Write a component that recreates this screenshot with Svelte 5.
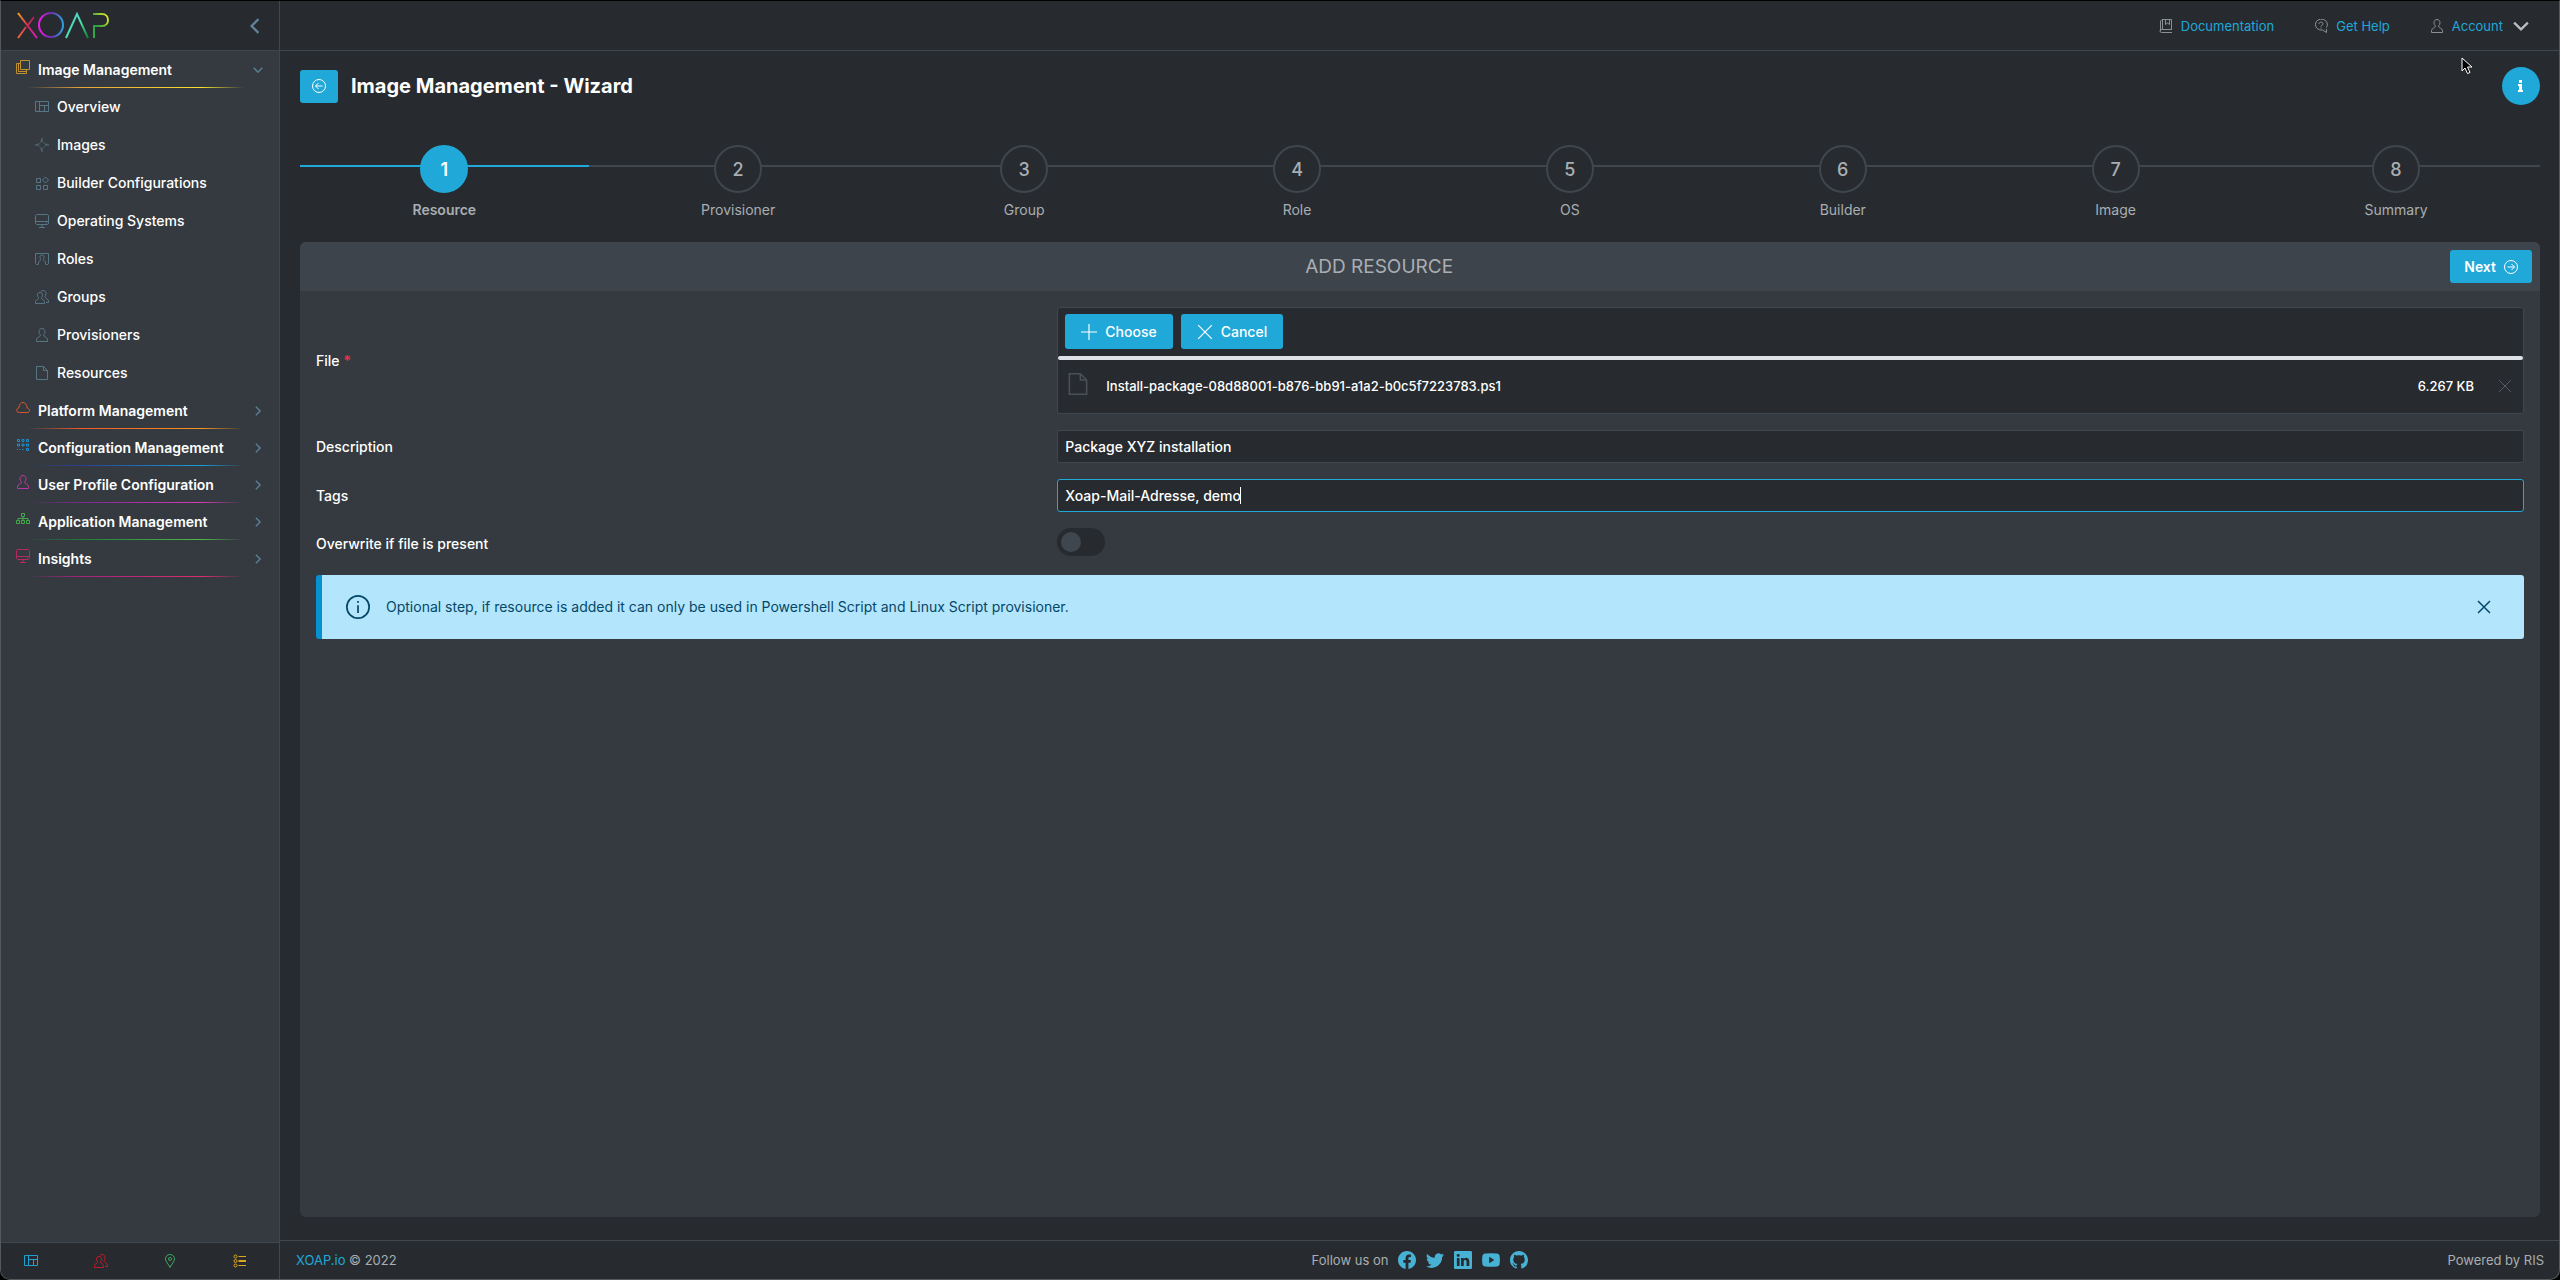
<script lang="ts">
	import { onMount } from 'svelte';

	interface Section {
		label: string;
		icon: string;
		color: string;
		from: string;
		to: string;
		open?: boolean;
		items?: { label: string; icon: string }[];
	}

	// Outline icons on a 14px grid
	const person =
		'M7 .5C5.200 .5 4 1.800 4 3.800c0 1.300.5 2.300 1.200 2.900v1.300C4.800 9 2 9 1.500 11.500v2h11v-2C12 9 9.200 9 8.800 8V6.700C9.500 6.100 10 5.100 10 3.800 10 1.800 8.800.5 7 .5z';
	const icons: Record<string, string> = {
		layout: 'M.5 1.500h13v10H.5zM4.500 1.500v10M4.500 5.500h9M9.500 5.500v6',
		images:
			'M7 0v4M7 10v4M0 7h4M10 7h4M4.500 5.500l1-1M8.500 4.500l1 1M9.500 8.500l-1 1M5.500 9.500l-1-1M3 5.500V7M11 5.500V7M5.500 3H7M5.500 11H7',
		builder: 'M1.500 2.500h4v4h-4zM1.500 9.500h4v4h-4zM8.500 9.500h4v4h-4zM10.500 1l3 3-3 3-3-3z',
		monitor: 'M1.500.5h11l1 1v8l-1 1h-11l-1-1v-8zM.5 7.500h13M7 10.500v3M4 13.500h6M11 9h1',
		roles:
			'M3 12.500H1.500l-1-1v-10h13v10l-1 1H11M7 3C5.500 3 5 4 5 5.200S5.500 7 5.500 7.500C5.500 9 4 9 3.500 10v2.500M7 3c1.500 0 2 1 2 2.200S8.500 7 8.500 7.500c0 1.500 1.500 1.500 2 2.500v2.500',
		groups:
			'M5 2.500c-1.600 0-2.500 1-2.500 2.700 0 1.200.4 1.900 1 2.400v1C3 9.600.8 9.700.5 11.500v2h9v-2C9.200 9.700 7 9.600 6.500 8.600v-1c.6-.5 1-1.200 1-2.400C7.500 3.500 6.600 2.500 5 2.500zM6 1.500C6.600.8 7.300.5 8.200.5c1.800 0 2.800 1.300 2.800 3 0 1.300-.5 2.200-1 2.700v1c.5 1.500 3.200 1.600 3.500 3.800v1.500H11',
		person,
		file: 'M1.500.5h7l4 4v9h-11zM8.500.5v4h4',
		copy: 'M4.500.5h9v9h-9zM4.500 3.500h-4v10h10v-4M2.500 3.500v8h8',
		cloud:
			'M3.500 11.500h7.500c3.500 0 3.200-4.300.2-4.500C11 3.500 9 1.500 7 1.500S3 3.500 2.800 7C-.2 7.200-.2 11.500 3.500 11.500z',
		grid: 'M1.500 1.500h2v2h-2zM6 1.500h2v2H6zM10.500 1.500h2v2h-2zM1.500 6h2v2h-2zM6 6h2v2H6zM10.500 6h2v2h-2zM10.500 10.500h2v2h-2zM1 11.500h1M3.500 11.500h1M6 11.500h1.500',
		tree: 'M5.500 1.500h3v3h-3zM.5 8.500h3v3h-3zM5.500 8.500h3v3h-3zM10.500 8.500h3v3h-3zM7 4.500v4M2 8.500v-2h10v2',
		pin: 'M7 .5C4.300.5 2.500 2.500 2.500 5c0 2.500 3 5 4.500 8.500C8.500 10 11.500 7.500 11.500 5 11.500 2.500 9.700.5 7 .5zM7 3.500a1.500 1.500 0 1 0 0 3 1.500 1.500 0 1 0 0-3z',
		list: 'M2.500 1a1.500 1.500 0 1 0 0 3 1.500 1.500 0 1 0 0-3zM2.500 5.500a1.500 1.500 0 1 0 0 3 1.500 1.500 0 1 0 0-3zM2.500 10a1.500 1.500 0 1 0 0 3 1.500 1.500 0 1 0 0-3zM5.500 2.500H13M5.500 6.500H13M5.500 7.500H13M5.500 11.500H13',
		book: 'M13 10.500H2.500M3 .5h9.500v10M1.500 12V2L3 .5M2.500 10.500a1.500 1.500 0 0 0 0 3H13M3.500.5v10M6.500.5v5l2-1.500 2 1.500v-5',
		help: 'M12.500 8.500A6 5.500 0 1 0 8.500 11l4 2.500V10M5 5c0-2.500 4-2.500 4 0 0 1-2 1-2 2.500M7 8.500v1',
		left: 'M7 .5a6.500 6.500 0 1 0 0 13 6.500 6.500 0 1 0 0-13zM10.500 7h-7M6.500 4l-3 3 3 3',
		right: 'M7 .5a6.500 6.500 0 1 0 0 13 6.500 6.500 0 1 0 0-13zM3.500 7h7M7.500 4l3 3-3 3',
		plus: 'M7 0v14M0 7h14',
		cross: 'M1 1l12 12M13 1L1 13',
		chevronDown: 'M1 4l6 6 6-6',
		chevronLeft: 'M10 1L4 7l6 6',
		chevronRight: 'M4 1l6 6-6 6',
		info: 'M7 .5a6.500 6.500 0 1 0 0 13 6.500 6.500 0 1 0 0-13zM7 6v4.500M7 3.500v1'
	};

	const sections: Section[] = [
		{
			label: 'Image Management',
			icon: 'copy',
			color: '#c0912f',
			from: '#e8a33d',
			to: '#f7e02e',
			open: true,
			items: [
				{ label: 'Overview', icon: 'layout' },
				{ label: 'Images', icon: 'images' },
				{ label: 'Builder Configurations', icon: 'builder' },
				{ label: 'Operating Systems', icon: 'monitor' },
				{ label: 'Roles', icon: 'roles' },
				{ label: 'Groups', icon: 'groups' },
				{ label: 'Provisioners', icon: 'person' },
				{ label: 'Resources', icon: 'file' }
			]
		},
		{ label: 'Platform Management', icon: 'cloud', color: '#d9582b', from: '#f05a28', to: '#f7941e' },
		{ label: 'Configuration Management', icon: 'grid', color: '#1b8fd0', from: '#2b3f94', to: '#16a0dc' },
		{ label: 'User Profile Configuration', icon: 'person', color: '#b93aa6', from: '#7a2a8f', to: '#d63cb6' },
		{ label: 'Application Management', icon: 'tree', color: '#45a848', from: '#1f7d3c', to: '#52b848' },
		{ label: 'Insights', icon: 'monitor', color: '#b72a66', from: '#a5237f', to: '#dc2f6c' }
	];

	const shortcuts = [
		{ label: 'Dashboard', icon: 'layout', color: '#20a0d0' },
		{ label: 'Users', icon: 'groups', color: '#c01c28' },
		{ label: 'Locations', icon: 'pin', color: '#3fa564' },
		{ label: 'Tasks', icon: 'list', color: '#dba520' }
	];

	const steps = ['Resource', 'Provisioner', 'Group', 'Role', 'OS', 'Builder', 'Image', 'Summary'];

	const social = [
		{
			label: 'Facebook',
			d: 'M16 8.049c0-4.446-3.582-8.05-8-8.05C3.58 0-.002 3.603-.002 8.05c0 4.017 2.926 7.347 6.750 7.951v-5.625h-2.030V8.050H6.750V6.275c0-2.017 1.195-3.131 3.022-3.131.876 0 1.791.157 1.791.157v1.980h-1.009c-.993 0-1.303.621-1.303 1.258v1.510h2.218l-.354 2.326H9.250V16c3.824-.604 6.750-3.934 6.750-7.951z'
		},
		{
			label: 'Twitter',
			d: 'M5.026 15c6.038 0 9.341-5.003 9.341-9.334 0-.14 0-.282-.006-.422A6.685 6.685 0 0 0 16 3.542a6.658 6.658 0 0 1-1.889.518 3.301 3.301 0 0 0 1.447-1.817 6.533 6.533 0 0 1-2.087.793A3.286 3.286 0 0 0 7.875 6.030a9.325 9.325 0 0 1-6.767-3.429 3.289 3.289 0 0 0 1.018 4.382A3.323 3.323 0 0 1 .64 6.575v.045a3.288 3.288 0 0 0 2.632 3.218 3.203 3.203 0 0 1-.865.115 3.230 3.230 0 0 1-.614-.057 3.283 3.283 0 0 0 3.067 2.277A6.588 6.588 0 0 1 .78 13.580a6.320 6.320 0 0 1-.78-.045A9.344 9.344 0 0 0 5.026 15z'
		},
		{
			label: 'LinkedIn',
			d: 'M0 1.146C0 .513.526 0 1.175 0h13.650C15.474 0 16 .513 16 1.146v13.708c0 .633-.526 1.146-1.175 1.146H1.175C.526 16 0 15.487 0 14.854V1.146zm4.943 12.248V6.169H2.542v7.225h2.401zm-1.200-8.212c.837 0 1.358-.554 1.358-1.248-.015-.709-.52-1.248-1.342-1.248-.822 0-1.359.54-1.359 1.248 0 .694.521 1.248 1.327 1.248h.016zm4.908 8.212V9.359c0-.216.016-.432.08-.586.173-.431.568-.878 1.232-.878.869 0 1.216.662 1.216 1.634v3.865h2.401V9.250c0-2.220-1.184-3.252-2.764-3.252-1.274 0-1.845.7-2.165 1.193V6.169h-2.400c.03.678 0 7.225 0 7.225h2.400z'
		},
		{
			label: 'YouTube',
			d: 'M3 2.300Q8 1.800 13 2.300Q15.500 2.500 15.700 5Q16.100 8 15.700 11Q15.500 13.500 13 13.700Q8 14.200 3 13.700Q.5 13.500.3 11Q-.1 8 .3 5Q.5 2.500 3 2.300zM6.400 5.200v5.600L11 8z'
		},
		{
			label: 'GitHub',
			d: 'M8 0C3.580 0 0 3.580 0 8c0 3.540 2.290 6.530 5.470 7.590.4.07.55-.17.55-.38 0-.19-.01-.82-.01-1.490-2.010.37-2.530-.49-2.690-.94-.09-.23-.48-.94-.82-1.130-.28-.15-.68-.52-.01-.53.63-.01 1.080.58 1.230.82.72 1.210 1.870.87 2.330.66.07-.52.28-.87.51-1.070-1.780-.2-3.640-.89-3.640-3.950 0-.87.31-1.590.82-2.150-.08-.2-.36-1.020.08-2.120 0 0 .67-.21 2.200.82.64-.18 1.320-.27 2-.27.68 0 1.360.09 2 .27 1.530-1.040 2.200-.82 2.200-.82.44 1.100.16 1.920.08 2.120.51.56.82 1.270.82 2.150 0 3.070-1.870 3.750-3.650 3.950.29.25.54.73.54 1.480 0 1.070-.01 1.930-.01 2.200 0 .21.15.46.55.38A8.013 8.013 0 0 0 16 8c0-4.420-3.580-8-8-8z'
		}
	];

	let activeStep = $state(0);
	let description = $state('Package XYZ installation');
	let tags = $state('Xoap-Mail-Adresse, demo');
	let overwrite = $state(false);
	let showHint = $state(true);
	let tagsEl = $state<HTMLInputElement | null>(null);
	let caretX = $state(0);

	function placeCaret() {
		if (!tagsEl) return;
		const ctx = document.createElement('canvas').getContext('2d');
		if (!ctx) return;
		const style = getComputedStyle(tagsEl);
		ctx.font = `${style.fontWeight} ${style.fontSize} ${style.fontFamily}`;
		const end = tagsEl.selectionEnd ?? tags.length;
		caretX = parseInt(style.paddingLeft) + Math.round(ctx.measureText(tags.slice(0, end)).width);
	}

	onMount(() => {
		tagsEl?.focus();
		tagsEl?.setSelectionRange(tags.length, tags.length);
		placeCaret();
	});
</script>

{#snippet icon(name: string, size = 14, weight = 1)}
	<svg
		width={size}
		height={size}
		viewBox="0 0 14 14"
		fill="none"
		stroke="currentColor"
		stroke-width={weight}
		aria-hidden="true"
	>
		<path d={icons[name]} />
	</svg>
{/snippet}

<div class="app">
	<aside class="sidebar">
		<div class="brand">
			<a href="#home" aria-label="XOAP">
				<svg width="94" height="28" viewBox="0 0 94 28" fill="none" stroke-width="2">
					<defs>
						<linearGradient id="x1" x1="0" y1="0" x2="1" y2="1">
							<stop offset="0" stop-color="#f7a51e" />
							<stop offset="0.5" stop-color="#d6285a" />
							<stop offset="1" stop-color="#e019c8" />
						</linearGradient>
						<linearGradient id="x2" x1="1" y1="0" x2="0" y2="1">
							<stop offset="0" stop-color="#b01a5c" />
							<stop offset="1" stop-color="#f0643c" />
						</linearGradient>
						<linearGradient id="o" x1="0" y1="0" x2="1" y2="0">
							<stop offset="0" stop-color="#f01ae6" />
							<stop offset="0.5" stop-color="#6a2fb0" />
							<stop offset="1" stop-color="#2fa0e0" />
						</linearGradient>
						<linearGradient id="a" x1="0" y1="0" x2="1" y2="1">
							<stop offset="0" stop-color="#4fc3e8" />
							<stop offset="0.5" stop-color="#4fe0a8" />
							<stop offset="1" stop-color="#137a3c" />
						</linearGradient>
						<linearGradient id="p" x1="0" y1="1" x2="1" y2="0">
							<stop offset="0" stop-color="#2fae4c" />
							<stop offset="0.4" stop-color="#2f9e40" />
							<stop offset="1" stop-color="#e8f01e" />
						</linearGradient>
					</defs>
					<path d="M1 1l19 25" stroke="url(#x1)" />
					<path d="M17 5L11 13M9 15L1 26" stroke="url(#x2)" />
					<circle cx="34" cy="13" r="12" stroke="url(#o)" />
					<path d="M49 26L60 2l11 24" stroke="url(#a)" />
					<path d="M76 2h9c8 0 8 12 0 12h-8v12" stroke="url(#p)" />
				</svg>
			</a>
			<button class="collapse" aria-label="Collapse menu">{@render icon('chevronLeft', 16, 2)}</button>
		</div>

		<nav class="menu">
			{#each sections as section}
				<button class="section" aria-expanded={!!section.open}>
					<span class="section-icon" style="color: {section.color}">{@render icon(section.icon)}</span>
					<span class="section-label">{section.label}</span>
					<span class="arrow">{@render icon(section.open ? 'chevronDown' : 'chevronRight', 10, 2)}</span>
				</button>
				<div
					class="underline"
					style="background-image: linear-gradient(90deg, transparent 4%, {section.from} 26%, {section.to} 75%, transparent 92%)"
				></div>
				{#each section.items ?? [] as item}
					<a class="item" href="#{item.icon}">
						{@render icon(item.icon)}
						<span>{item.label}</span>
					</a>
				{/each}
			{/each}
		</nav>

		<div class="shortcuts">
			{#each shortcuts as s}
				<button aria-label={s.label} style="color: {s.color}">{@render icon(s.icon)}</button>
			{/each}
		</div>
	</aside>

	<div class="page">
		<header class="topbar">
			<a href="#docs">{@render icon('book')}Documentation</a>
			<a href="#help">{@render icon('help')}Get Help</a>
			<button class="account">
				{@render icon('person')}Account
				<span class="account-arrow">{@render icon('chevronDown', 16, 2)}</span>
			</button>
		</header>

		<main class="content">
			<div class="title-row">
				<button class="btn back" aria-label="Back">{@render icon('left')}</button>
				<h1>Image Management - Wizard</h1>
				<button class="info-btn" aria-label="Information">
					<svg width="8" height="12" viewBox="0 0 8 12" fill="currentColor">
						<path d="M2 0h3v3H2zM1 4h4v6h1v2H1v-2h1V6H1z" />
					</svg>
				</button>
			</div>

			<ol class="steps">
				{#each steps as step, i}
					<li class:active={i === activeStep}>
						<button onclick={() => (activeStep = i)}>
							<span class="number">{i + 1}</span>
							<span class="step-label">{step}</span>
						</button>
					</li>
				{/each}
			</ol>

			<section class="panel">
				<div class="panel-header">
					<h2>ADD RESOURCE</h2>
					<button class="btn next">Next {@render icon('right')}</button>
				</div>

				<div class="panel-body">
					<div class="field">
						<span class="label" id="file-label">File <b>*</b></span>
						<div class="upload" role="group" aria-labelledby="file-label">
							<div class="upload-bar">
								<button class="btn choose">{@render icon('plus', 16)}Choose</button>
								<button class="btn choose">{@render icon('cross', 16)}Cancel</button>
							</div>
							<div class="progress"></div>
							<div class="file-row">
								<span class="file-icon">{@render icon('file', 22)}</span>
								<span class="file-name">Install-package-08d88001-b876-bb91-a1a2-b0c5f7223783.ps1</span>
								<span>6.267 KB</span>
								<button class="remove" aria-label="Remove file">{@render icon('cross')}</button>
							</div>
						</div>
					</div>

					<div class="field">
						<label for="description">Description</label>
						<input id="description" type="text" bind:value={description} />
					</div>

					<div class="field">
						<label for="tags">Tags</label>
						<div class="tags">
							<input
								id="tags"
								type="text"
								bind:this={tagsEl}
								bind:value={tags}
								oninput={placeCaret}
								onkeyup={placeCaret}
								onclick={placeCaret}
							/>
							<span class="caret" style="left: {caretX}px"></span>
						</div>
					</div>

					<div class="field switch-field">
						<label for="overwrite">Overwrite if file is present</label>
						<input id="overwrite" class="switch" type="checkbox" bind:checked={overwrite} />
					</div>

					{#if showHint}
						<div class="message">
							{@render icon('info', 24)}
							<span>
								Optional step, if resource is added it can only be used in Powershell Script and Linux
								Script provisioner.
							</span>
							<button aria-label="Dismiss" onclick={() => (showHint = false)}>
								{@render icon('cross', 14, 1.5)}
							</button>
						</div>
					{/if}
				</div>
			</section>
		</main>

		<footer class="footer">
			<span><a href="#xoap">XOAP.io</a> © 2022</span>
			<div class="follow">
				<span>Follow us on</span>
				{#each social as s}
					<a href="#{s.label}" aria-label={s.label}>
						<svg width="18" height="18" viewBox="0 0 16 16" fill="currentColor" fill-rule="evenodd">
							<path d={s.d} />
						</svg>
					</a>
				{/each}
			</div>
			<span class="powered">Powered by RIS</span>
		</footer>
	</div>

	<svg class="pointer" width="12" height="18" viewBox="0 0 12 18" fill="#000" stroke="#fff" aria-hidden="true">
		<path d="M1 1v13l3-3 2.500 5.500 2.500-1L6.500 10H11z" />
	</svg>
</div>

<style>
	:global(body) {
		background: #000;
	}

	.app {
		--bg: #272b2f;
		--surface: #353a40;
		--border: #3f464d;
		--accent: #20a8d8;
		--muted: #a9aeb3;
		position: relative;
		display: flex;
		box-sizing: border-box;
		min-height: 100vh;
		overflow: hidden;
		border: 1px solid #55595c;
		border-top-color: #000;
		border-radius: 0 0 10px 10px;
		background: var(--bg);
		color: #fff;
		font: 500 14px/20px Inter, 'Liberation Sans', sans-serif;
	}

	.app :global(svg) {
		display: block;
		flex: none;
	}

	a {
		color: inherit;
		text-decoration: none;
	}

	button {
		padding: 0;
		border: none;
		background: none;
		color: inherit;
		font: inherit;
		cursor: pointer;
	}

	.sidebar {
		display: flex;
		flex: none;
		flex-direction: column;
		width: 278px;
		border-right: 1px solid var(--border);
		background: var(--surface);
	}

	.brand {
		display: flex;
		align-items: center;
		justify-content: space-between;
		height: 49px;
		padding: 0 16px;
		border-bottom: 1px solid var(--border);
		background: var(--bg);
	}

	.collapse {
		color: #5f8399;
	}

	.menu {
		flex: 1;
	}

	.section {
		display: flex;
		box-sizing: border-box;
		align-items: center;
		gap: 8px;
		width: 100%;
		height: 36px;
		padding: 2px 16px 0 15px;
		font-weight: 600;
		text-align: left;
	}

	.section-icon {
		padding-bottom: 6px;
	}

	.section-label {
		flex: 1;
	}

	.arrow {
		color: #5b7f94;
	}

	.underline {
		height: 1px;
		margin: 0 16px;
	}

	.item {
		display: flex;
		align-items: center;
		gap: 8px;
		height: 38px;
		padding-left: 34px;
	}

	.item :global(svg) {
		color: #567686;
	}

	.shortcuts {
		display: flex;
		align-items: center;
		justify-content: space-between;
		height: 36px;
		padding: 0 32px 0 23px;
		border-top: 1px solid var(--border);
		background: var(--bg);
	}

	.page {
		display: flex;
		flex: 1;
		flex-direction: column;
		min-width: 0;
	}

	.topbar {
		display: flex;
		align-items: center;
		justify-content: flex-end;
		gap: 40px;
		height: 49px;
		padding-right: 30px;
		border-bottom: 1px solid var(--border);
		color: var(--accent);
	}

	.topbar a,
	.account {
		display: flex;
		align-items: center;
		gap: 8px;
		font-size: 13px;
		font-weight: 400;
	}

	.topbar :global(svg) {
		color: #8b9095;
	}

	.topbar .account-arrow {
		padding-left: 2px;
	}

	.topbar .account-arrow :global(svg) {
		color: #b9bdc1;
	}

	.content {
		display: flex;
		flex: 1;
		flex-direction: column;
		padding: 16px 19px 23px 20px;
	}

	.title-row {
		display: flex;
		align-items: center;
		gap: 13px;
	}

	h1 {
		flex: 1;
		margin: 0;
		font-size: 20px;
		font-weight: 700;
		line-height: 28px;
	}

	.btn {
		display: flex;
		align-items: center;
		justify-content: center;
		height: 33px;
		border-radius: 3px;
		background: var(--accent);
	}

	.back {
		width: 38px;
	}

	.info-btn {
		display: flex;
		align-items: center;
		justify-content: center;
		width: 38px;
		height: 38px;
		border-radius: 50%;
		background: var(--accent);
	}

	.steps {
		display: flex;
		margin: 40px 0 22px;
		padding: 0;
		list-style: none;
	}

	/* connecting line runs behind the number circles */
	.steps li {
		display: flex;
		flex: 1 1 auto;
		justify-content: center;
		background: linear-gradient(var(--border), var(--border)) 0 20px / 100% 2px no-repeat;
	}

	.steps li.active {
		background-image: linear-gradient(var(--accent), var(--accent));
	}

	.steps button {
		display: flex;
		flex-direction: column;
		align-items: center;
		gap: 7px;
		color: var(--muted);
		font-weight: 400;
	}

	.number {
		box-sizing: border-box;
		width: 48px;
		height: 48px;
		border: 2px solid var(--border);
		border-radius: 50%;
		background: var(--bg);
		font-size: 18px;
		font-weight: 500;
		line-height: 45px;
	}

	.active .number {
		border-color: var(--accent);
		background: var(--accent);
		color: #fff;
		font-weight: 600;
	}

	.active .step-label {
		font-weight: 600;
	}

	.panel {
		flex: 1;
		overflow: hidden;
		border-radius: 6px;
		background: var(--surface);
	}

	.panel-header {
		display: flex;
		align-items: center;
		padding: 8px;
		background: #3d444b;
	}

	h2 {
		flex: 1;
		margin: 0;
		color: var(--muted);
		font-size: 19px;
		font-weight: 400;
		text-align: center;
	}

	.next {
		gap: 8px;
		padding: 0 14px;
		font-weight: 600;
	}

	.panel-body {
		display: flex;
		flex-direction: column;
		gap: 16px;
		padding: 16px;
	}

	.field {
		display: grid;
		grid-template-columns: 1fr 2fr;
		align-items: center;
		gap: 8px;
	}

	.label b {
		color: #e8304a;
	}

	.upload {
		border: 1px solid var(--border);
		border-radius: 3px;
		background: var(--bg);
	}

	.upload-bar {
		display: flex;
		gap: 8px;
		padding: 6px 7px;
	}

	.choose {
		gap: 8px;
		height: 35px;
		padding: 0 16px;
	}

	.progress {
		height: 4px;
		margin-top: 1px;
		border-radius: 2px;
		background: #dee2e6;
	}

	.file-row {
		display: flex;
		align-items: center;
		height: 51px;
		padding: 0 11px 2px 9px;
		font-size: 13px;
	}

	.file-icon {
		padding-bottom: 4px;
		color: #4a5056;
	}

	.file-name {
		flex: 1;
		padding-left: 17px;
	}

	.remove {
		padding-left: 24px;
		color: #565c62;
	}

	input[type='text'] {
		box-sizing: border-box;
		width: 100%;
		height: 33px;
		padding: 0 7px;
		border: 1px solid var(--border);
		border-radius: 3px;
		outline: none;
		background: var(--bg);
		color: #fff;
		font: inherit;
	}

	.tags {
		position: relative;
	}

	.tags input[type='text'] {
		border-color: var(--accent);
		caret-color: transparent;
	}

	.caret {
		position: absolute;
		top: 8px;
		width: 1px;
		height: 17px;
		background: #fff;
	}

	.switch-field {
		align-items: start;
		min-height: 31px;
	}

	.switch-field label {
		line-height: 31px;
	}

	.switch {
		width: 48px;
		height: 28px;
		margin: 0;
		padding: 4px;
		box-sizing: border-box;
		border-radius: 14px;
		background: var(--bg);
		appearance: none;
		cursor: pointer;
	}

	.switch::before {
		display: block;
		width: 20px;
		height: 20px;
		border-radius: 50%;
		background: #3f464d;
		content: '';
	}

	.switch:checked {
		background: var(--accent);
	}

	.switch:checked::before {
		margin-left: auto;
	}

	.message {
		display: flex;
		align-items: center;
		gap: 16px;
		height: 64px;
		padding: 0 33px 0 24px;
		border-left: 6px solid #0891cf;
		border-radius: 3px;
		background: #b3e5fc;
		color: #044868;
		box-sizing: border-box;
		font-weight: 400;
	}

	.message span {
		flex: 1;
	}

	.footer {
		display: grid;
		grid-template-columns: 1fr auto 1fr;
		align-items: center;
		height: 38px;
		padding: 0 15px 0 16px;
		border-top: 1px solid var(--border);
		color: var(--muted);
		font-size: 13px;
		font-weight: 400;
	}

	.footer a {
		color: var(--accent);
	}

	.follow {
		display: flex;
		align-items: center;
		gap: 10px;
	}

	.follow a {
		color: #47b2d4;
	}

	.powered {
		text-align: right;
	}

	.pointer {
		position: absolute;
		top: 56px;
		right: 86px;
	}
</style>
